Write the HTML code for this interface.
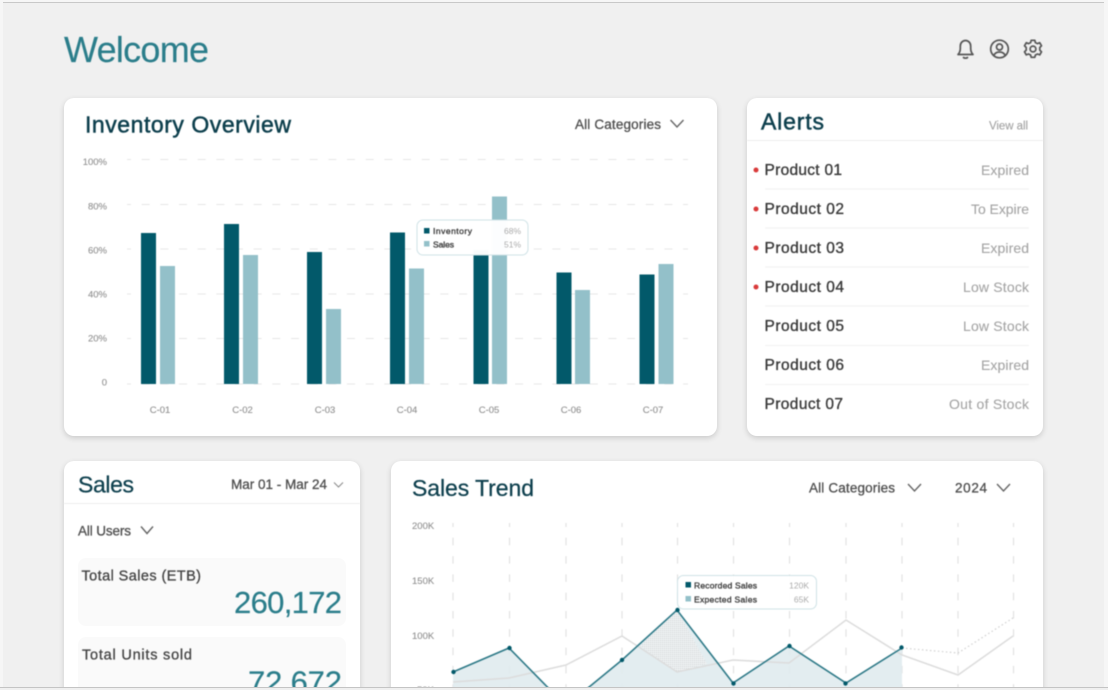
<!DOCTYPE html>
<html lang="en">
<head>
<meta charset="utf-8">
<title>Welcome</title>
<style>
html,body{margin:0;padding:0;width:1108px;height:690px;overflow:hidden;background:#f6f6f6}
#page{position:relative;width:1108px;height:690px;overflow:hidden;background:#f0f0f0}
.card{position:absolute;background:#fff;border-radius:10px;box-shadow:0 2px 6px rgba(0,0,0,.16)}
.panel{position:absolute;background:#fafafa;border-radius:8px}
svg{position:absolute;left:0;top:0;filter:blur(.4px)}
text{font-family:"Liberation Sans",sans-serif}
.h{fill:#0d3f4d;stroke:#0d3f4d;stroke-width:.5;font-size:23px}
.sel{fill:#4f4f4f;stroke:#4f4f4f;stroke-width:.3;font-size:13.5px}
.ax{fill:#8f8f8f;stroke:#8f8f8f;stroke-width:.1;font-size:9.5px}
.p{fill:#3a3a3a;stroke:#3a3a3a;stroke-width:.35;font-size:15.5px}
.st{fill:#a4a4a4;stroke:#a4a4a4;stroke-width:.1;font-size:14px}
.big{fill:#2a7d8a;stroke:#2a7d8a;stroke-width:.2;font-size:31px}
.lab{fill:#444;stroke:#444;stroke-width:.3;font-size:14.5px}
.tt{fill:#3f3f3f;stroke:#3f3f3f;stroke-width:.35;font-size:8.5px}
.tv{fill:#aaa;font-size:8.5px}
.chev{fill:none;stroke:#666;stroke-width:1.4}
.grid{stroke:#e6e6e6;stroke-width:1;stroke-dasharray:8 10.67;stroke-dashoffset:4}
.vg{stroke:#e2e2e2;stroke-width:1.2;stroke-dasharray:7.5 10.8;stroke-dashoffset:3.5}
.ico{fill:none;stroke:#555;stroke-width:1.7;stroke-linecap:round;stroke-linejoin:round}
#bl{position:absolute;left:0;top:687px;width:1108px;height:3px;background:#f0f0f0;border-top:1px solid #c4c4c4;box-sizing:border-box}
#tl{position:absolute;left:0;top:0;width:1108px;height:3px;background:#f6f6f6;border-bottom:1px solid #c8c8c8;box-sizing:border-box}
#ll{position:absolute;left:0;top:0;width:3px;height:690px;background:#f6f6f6}
#rl{position:absolute;right:0;top:0;width:4px;height:690px;background:#f6f6f6}
</style>
</head>
<body>
<div id="page">
  <div class="card" style="left:64px;top:98px;width:653px;height:338px"></div>
  <div class="card" style="left:747px;top:98px;width:296px;height:338px"></div>
  <div class="card" style="left:64px;top:461px;width:296px;height:260px"></div>
  <div class="card" style="left:390.500px;top:461px;width:652.500px;height:260px"></div>
  <div class="panel" style="left:78px;top:558px;width:268px;height:68px"></div>
  <div class="panel" style="left:78px;top:637px;width:268px;height:68px"></div>

  <svg width="1108" height="690" viewBox="0 0 1108 690" xmlns="http://www.w3.org/2000/svg">
    <defs>
      <pattern id="hatch" width="2" height="2" patternUnits="userSpaceOnUse">
        <rect width="2" height="2" fill="#f1f3f4"/>
        <rect width="1" height="1" fill="#c9d0d2"/>
      </pattern>
    </defs>

    <!-- Header -->
    <text x="64" y="62" font-size="36" fill="#2a7d8a" stroke="#2a7d8a" stroke-width=".15" textLength="145" lengthAdjust="spacing">Welcome</text>
    <g class="ico">
      <path d="M958 54.500h15c-1.500-1.500-2.300-3.500-2.300-6v-2.500c0-3-2.200-5.500-5.200-5.500s-5.200 2.500-5.200 5.500v2.500c0 2.500-.8 4.500-2.300 6z"/>
      <path d="M963.500 57.500c.8.900 3.200.9 4 0"/>
      <circle cx="999.500" cy="49" r="8.800"/>
      <circle cx="999.500" cy="47" r="3"/>
      <path d="M993.800 55.500c1-2.300 3.200-3.500 5.700-3.500s4.700 1.200 5.700 3.500"/>
      <circle cx="1033" cy="49" r="2.900"/>
      <path d="M1031.200 40.300h3.600l.6 2.300 2.100 1 2.200-.9 1.800 3.100-1.700 1.700v2.600l1.700 1.700-1.800 3.100-2.200-.9-2.100 1-.6 2.300h-3.600l-.6-2.300-2.100-1-2.200.9-1.800-3.100 1.700-1.700v-2.600l-1.700-1.700 1.800-3.100 2.200.9 2.100-1z"/>
    </g>

    <!-- Inventory Overview -->
    <text class="h" x="85" y="132.500" textLength="206" lengthAdjust="spacing">Inventory Overview</text>
    <text class="sel" x="575" y="129" font-size="13" textLength="86" lengthAdjust="spacing">All Categories</text>
    <path class="chev" d="M670.500 120l6.500 7 6.500-7"/>

    <g class="grid">
      <line x1="127" x2="688" y1="159.500" y2="159.500"/>
      <line x1="127" x2="688" y1="204.500" y2="204.500"/>
      <line x1="127" x2="688" y1="249" y2="249"/>
      <line x1="127" x2="688" y1="294" y2="294"/>
      <line x1="127" x2="688" y1="338.500" y2="338.500"/>
      <line x1="127" x2="688" y1="384" y2="384"/>
    </g>
    <g class="ax" text-anchor="end">
      <text x="107" y="165">100%</text>
      <text x="107" y="209.500">80%</text>
      <text x="107" y="253.500">60%</text>
      <text x="107" y="297.500">40%</text>
      <text x="107" y="341.500">20%</text>
      <text x="107" y="385.500">0</text>
    </g>
    <g class="ax" text-anchor="middle">
      <text x="160" y="413">C-01</text>
      <text x="242.500" y="413">C-02</text>
      <text x="325" y="413">C-03</text>
      <text x="407" y="413">C-04</text>
      <text x="489" y="413">C-05</text>
      <text x="571" y="413">C-06</text>
      <text x="653" y="413">C-07</text>
    </g>
    <g fill="#02596a">
      <rect x="141" y="233" width="15" height="151"/>
      <rect x="224" y="224" width="15" height="160"/>
      <rect x="307" y="252" width="15" height="132"/>
      <rect x="390" y="232.500" width="15" height="151.500"/>
      <rect x="473.500" y="250" width="15" height="134"/>
      <rect x="556.500" y="272.500" width="15" height="111.500"/>
      <rect x="639.500" y="274.500" width="15" height="109.500"/>
    </g>
    <g fill="#93c0c9">
      <rect x="160" y="266" width="15" height="118"/>
      <rect x="243" y="255" width="15" height="129"/>
      <rect x="326" y="309" width="15" height="75"/>
      <rect x="409" y="268.500" width="15" height="115.500"/>
      <rect x="492" y="196.500" width="15" height="187.500"/>
      <rect x="575" y="290" width="15" height="94"/>
      <rect x="658.500" y="264" width="15" height="120"/>
    </g>
    <rect x="417" y="220" width="111" height="35" rx="6" fill="#fff" fill-opacity=".97" stroke="#cfe2e6"/>
    <rect x="424" y="228" width="5.500" height="5.500" fill="#02596a"/>
    <rect x="424" y="241" width="5.500" height="5.500" fill="#93c0c9"/>
    <text class="tt" x="433" y="234" textLength="39" lengthAdjust="spacing">Inventory</text>
    <text class="tt" x="433" y="247.500" textLength="21" lengthAdjust="spacing">Sales</text>
    <text class="tv" x="521" y="234" text-anchor="end">68%</text>
    <text class="tv" x="521" y="247.500" text-anchor="end">51%</text>

    <!-- Alerts -->
    <text class="h" x="761" y="129.500" textLength="63" lengthAdjust="spacing">Alerts</text>
    <text x="989" y="129.500" font-size="11.500" fill="#a0a0a0" stroke="#a0a0a0" stroke-width=".1" textLength="39" lengthAdjust="spacing">View all</text>
    <line x1="747" x2="1043" y1="140.500" y2="140.500" stroke="#ececec"/>
    <g stroke="#f1f1f1">
      <line x1="765" x2="1029" y1="189" y2="189"/>
      <line x1="765" x2="1029" y1="228" y2="228"/>
      <line x1="765" x2="1029" y1="267" y2="267"/>
      <line x1="765" x2="1029" y1="306" y2="306"/>
      <line x1="765" x2="1029" y1="345.500" y2="345.500"/>
      <line x1="765" x2="1029" y1="384.500" y2="384.500"/>
    </g>
    <g fill="#d93a3a">
      <circle cx="756" cy="170" r="2.500"/>
      <circle cx="756" cy="209" r="2.500"/>
      <circle cx="756" cy="248" r="2.500"/>
      <circle cx="756" cy="287" r="2.500"/>
    </g>
    <text class="p" x="764.500" y="175" textLength="77.500" lengthAdjust="spacing">Product 01</text>
    <text class="p" x="764.500" y="214" textLength="79.500" lengthAdjust="spacing">Product 02</text>
    <text class="p" x="764.500" y="253" textLength="79.500" lengthAdjust="spacing">Product 03</text>
    <text class="p" x="764.500" y="292" textLength="79.500" lengthAdjust="spacing">Product 04</text>
    <text class="p" x="764.500" y="331" textLength="79.500" lengthAdjust="spacing">Product 05</text>
    <text class="p" x="764.500" y="370" textLength="79.500" lengthAdjust="spacing">Product 06</text>
    <text class="p" x="764.500" y="409" textLength="78.500" lengthAdjust="spacing">Product 07</text>
    <text class="st" x="981" y="175" textLength="48" lengthAdjust="spacing">Expired</text>
    <text class="st" x="971" y="214" textLength="58" lengthAdjust="spacing">To Expire</text>
    <text class="st" x="981" y="253" textLength="48" lengthAdjust="spacing">Expired</text>
    <text class="st" x="963" y="292" textLength="66" lengthAdjust="spacing">Low Stock</text>
    <text class="st" x="963" y="331" textLength="66" lengthAdjust="spacing">Low Stock</text>
    <text class="st" x="981" y="370" textLength="48" lengthAdjust="spacing">Expired</text>
    <text class="st" x="949" y="409" textLength="80" lengthAdjust="spacing">Out of Stock</text>

    <!-- Sales -->
    <text class="h" x="78" y="492.500" textLength="56" lengthAdjust="spacing" style="stroke-width:.25">Sales</text>
    <text class="sel" x="231" y="489" textLength="96" lengthAdjust="spacing">Mar 01 - Mar 24</text>
    <path class="chev" d="M334 482.500l4.500 4.500 4.500-4.500" style="stroke:#888;stroke-width:1"/>
    <line x1="64" x2="360" y1="503.500" y2="503.500" stroke="#ececec"/>
    <text class="sel" x="78" y="535.500" font-size="13" textLength="53" lengthAdjust="spacing">All Users</text>
    <path class="chev" d="M141 526.500l6 7 6-7"/>
    <text class="lab" x="81.500" y="580.500" textLength="119.500" lengthAdjust="spacing">Total Sales (ETB)</text>
    <text class="big" x="234" y="613" textLength="108" lengthAdjust="spacing">260,172</text>
    <text class="lab" x="82" y="659.500" textLength="110" lengthAdjust="spacing">Total Units sold</text>
    <text class="big" x="248" y="692.500" textLength="94" lengthAdjust="spacing">72,672</text>

    <!-- Sales Trend -->
    <text class="h" x="412" y="496" font-size="23.500" textLength="122" lengthAdjust="spacing" style="stroke-width:.25">Sales Trend</text>
    <text class="sel" x="809" y="492.500" textLength="86" lengthAdjust="spacing">All Categories</text>
    <path class="chev" d="M908 484l6.500 7 6.500-7"/>
    <text class="sel" x="955" y="492.500" textLength="32" lengthAdjust="spacing">2024</text>
    <path class="chev" d="M997 484l6.500 7 6.500-7"/>

    <g class="ax">
      <text x="412" y="529">200K</text>
      <text x="412" y="584">150K</text>
      <text x="412" y="639">100K</text>
      <text x="417" y="693">50K</text>
    </g>
    <g class="vg">
      <line x1="453" x2="453" y1="523" y2="690"/>
      <line x1="509.500" x2="509.500" y1="523" y2="690"/>
      <line x1="566" x2="566" y1="523" y2="690"/>
      <line x1="622" x2="622" y1="523" y2="690"/>
      <line x1="677.500" x2="677.500" y1="523" y2="690"/>
      <line x1="733.500" x2="733.500" y1="523" y2="690"/>
      <line x1="789.500" x2="789.500" y1="523" y2="690"/>
      <line x1="846" x2="846" y1="523" y2="690"/>
      <line x1="902" x2="902" y1="523" y2="690"/>
      <line x1="958" x2="958" y1="523" y2="690"/>
      <line x1="1013.500" x2="1013.500" y1="523" y2="690"/>
    </g>
    <!-- area fill -->
    <path d="M453 672L509 648L566 706L622 660L677 610L733 683L789 646L846 683L902 648V700H453z" fill="#e1ecef" fill-opacity=".92"/>
    <path d="M640 646L677 610L707 664L677 672z" fill="url(#hatch)"/>
    <!-- expected -->
    <path d="M453 682L509 678L566 665L622 636L677 672L733 660L789 663L846 620L902 655L958 675L1013 636" fill="none" stroke="#dcdcdc" stroke-width="1.500"/>
    <!-- recorded -->
    <path d="M453 672L509 648L566 706L622 660L677 610L733 683L789 646L846 683L902 648" fill="none" stroke="#2f7a88" stroke-width="1.600"/>
    <path d="M902 648L958 653L1013 618" fill="none" stroke="#d0d0d0" stroke-width="1.200" stroke-dasharray="1.500 2.500"/>
    <g fill="#02596a">
      <circle cx="453.500" cy="672" r="2.200"/>
      <circle cx="509.500" cy="648" r="2.200"/>
      <circle cx="622" cy="660" r="2.200"/>
      <circle cx="677.500" cy="610" r="2.200"/>
      <circle cx="733.500" cy="683.500" r="2.200"/>
      <circle cx="789.500" cy="646" r="2.200"/>
      <circle cx="845.500" cy="683.500" r="2.200"/>
      <circle cx="901.500" cy="647.500" r="2.200"/>
    </g>
    <rect x="677.500" y="575.500" width="139" height="33.500" rx="6" fill="#fff" fill-opacity=".97" stroke="#cfe2e6"/>
    <rect x="685.500" y="582" width="5.500" height="5.500" fill="#02596a"/>
    <rect x="685.500" y="596" width="5.500" height="5.500" fill="#93c0c9"/>
    <text class="tt" x="694" y="588.500" textLength="63" lengthAdjust="spacing">Recorded Sales</text>
    <text class="tt" x="694" y="602.500" textLength="63" lengthAdjust="spacing">Expected Sales</text>
    <text class="tv" x="809" y="588.500" text-anchor="end">120K</text>
    <text class="tv" x="809" y="602.500" text-anchor="end">65K</text>
  </svg>

  <div id="tl"></div>
  <div id="ll"></div>
  <div id="rl"></div>
  <div id="bl"></div>
</div>
</body>
</html>
